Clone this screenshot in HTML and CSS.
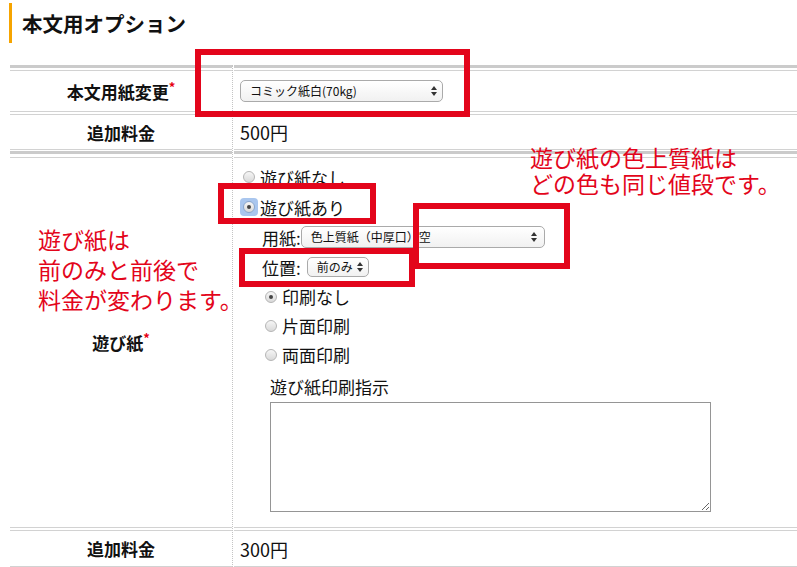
FILE: index.html
```html
<!DOCTYPE html>
<html lang="ja">
<head>
<meta charset="utf-8">
<title>本文用オプション</title>
<link rel="stylesheet" href="styles.css">
</head>
<body>
<h2 class="title">本文用オプション</h2>

<div class="form">
  <div class="divider"></div>

  <div class="bar bar-l bar-first"></div>
  <div class="bar bar-r bar-first"></div>

  <div class="th r1">本文用紙変更<span class="req">*</span></div>
  <div class="td r1">
    <span class="select s1"><span class="sel-text">コミック紙白(70kg)</span><svg class="arrows" width="6" height="10" viewBox="0 0 6 10"><path d="M0 4 L3 0 L6 4Z M0 6 L3 10 L6 6Z"/></svg></span>
  </div>

  <div class="th r2">追加料金</div>
  <div class="td r2 value">500円</div>

  <div class="bar bar-l bar-second"></div>
  <div class="bar bar-r bar-second"></div>

  <div class="th r3">遊び紙<span class="req">*</span></div>
  <div class="td r3">
    <div class="line l30 opt"><span class="radio"></span>遊び紙なし</div>
    <div class="line l30 opt"><span class="focus"><span class="radio checked"></span></span>遊び紙あり</div>
    <div class="line l30 field">用紙:<span class="select s2"><span class="sel-text">色上質紙（中厚口）空</span><svg class="arrows" width="6" height="10" viewBox="0 0 6 10"><path d="M0 4 L3 0 L6 4Z M0 6 L3 10 L6 6Z"/></svg></span></div>
    <div class="line l30 field">位置:<span class="select s3"><span class="sel-text">前のみ</span><svg class="arrows" width="6" height="10" viewBox="0 0 6 10"><path d="M0 4 L3 0 L6 4Z M0 6 L3 10 L6 6Z"/></svg></span></div>
    <div class="line l29 sub"><span class="radio checked"></span>印刷なし</div>
    <div class="line l29 sub"><span class="radio"></span>片面印刷</div>
    <div class="line l29 sub"><span class="radio"></span>両面印刷</div>
    <div class="memo-label">遊び紙印刷指示</div>
    <textarea class="memo"></textarea>
  </div>

  <div class="th r4">追加料金</div>
  <div class="td r4 value">300円</div>
</div>

<div class="mark m1"></div>
<div class="mark m2"></div>
<div class="mark m3"></div>
<div class="mark m4"></div>

<div class="note note-right">
  <div class="note-line">遊び紙の色上質紙は</div>
  <div class="note-line">どの色も同じ値段です。</div>
</div>
<div class="note note-left">
  <div class="note-line">遊び紙は</div>
  <div class="note-line">前のみと前後で</div>
  <div class="note-line">料金が変わります。</div>
</div>
</body>
</html>
```

FILE: styles.css
```css
html, body {
  margin: 0;
  padding: 0;
  background: #fff;
}

body {
  position: relative;
  width: 797px;
  height: 567px;
  overflow: hidden;
  font-family: "Noto Sans CJK JP", "Liberation Sans", sans-serif;
  color: #111;
}

.title {
  margin: 3px 0 0 9px;
  height: 40px;
  line-height: 40px;
  border-left: 3px solid #f6a400;
  padding-left: 10px;
  font-size: 20.5px;
  font-weight: bold;
  color: #111;
}

.form {
  margin: 22px 0 0 10px;
  display: grid;
  grid-template-columns: 222px 2px 1fr;
}

.divider {
  grid-column: 2;
  grid-row: 1 / span 6;
  width: 0;
  border-left: 1px dotted #c4c4c4;
}

.bar {
  height: 3px;
  background: #cbcbcb;
}
.bar-l { grid-column: 1; }
.bar-r { grid-column: 3; }
.bar-first { margin-bottom: 2px; }
.bar-second { margin-bottom: 3px; }

.th, .td {
  border-top: 1px solid #d2d2d2;
  border-bottom: 1px solid #d2d2d2;
}

.th {
  grid-column: 1;
  display: flex;
  align-items: center;
  justify-content: center;
  font-size: 17px;
  font-weight: bold;
  color: #111;
}

.td {
  grid-column: 3;
  font-size: 17px;
  color: #111;
}

.req {
  color: #e60012;
  font-size: 13px;
  align-self: center;
  margin-top: -10px;
}

.r1 { height: 40px; margin-bottom: 2px; }
.td.r1 {
  display: flex;
  align-items: center;
  padding-left: 6px;
}

.r2 { height: 34px; margin-bottom: 1px; }
.r3 { margin-bottom: 2px; }
.r4 { height: 35px; }

.value {
  display: flex;
  align-items: center;
  padding-left: 6px;
  font-size: 18px;
}

/* select look */
.select {
  box-sizing: border-box;
  display: inline-flex;
  align-items: center;
  justify-content: space-between;
  height: 22px;
  border: 1px solid #aaa;
  border-radius: 5px;
  background: linear-gradient(#ffffff, #f1f1f1);
  font-size: 12px;
  color: #111;
  line-height: 1;
}
.sel-text { white-space: nowrap; }
.arrows path { fill: #333; }

.s1 { width: 203px; padding: 0 5px 0 9px; }
.s2 { width: 244px; padding: 0 7px 0 9px; }
.s3 { width: 62px; height: 20px; padding: 0 5px 0 9px; margin-left: 6px; }

/* row 3 content */
.td.r3 {
  padding: 4px 0 15px 0;
}

.line {
  display: flex;
  align-items: center;
  white-space: nowrap;
}
.l30 { height: 30px; }
.l29 { height: 29px; }

.opt { padding-left: 9px; }
.field { padding-left: 28px; }
.sub { padding-left: 31px; }

.radio {
  box-sizing: border-box;
  display: inline-block;
  width: 12px;
  height: 12px;
  border-radius: 50%;
  border: 1px solid #b5b5b5;
  background: linear-gradient(#f6f6f6, #d9d9d9);
  margin-right: 5px;
  position: relative;
  flex: none;
}
.radio.checked::after {
  content: "";
  position: absolute;
  left: 3px;
  top: 3px;
  width: 4px;
  height: 4px;
  border-radius: 50%;
  background: #444;
}

.focus {
  display: inline-flex;
  align-items: center;
  justify-content: center;
  width: 18px;
  height: 18px;
  margin-left: -3px;
  margin-right: 2px;
  border-radius: 4px;
  background: #a9c6ee;
  flex: none;
}
.focus .radio { margin-right: 0; border-color: #8aa6cc; }

.memo-label {
  margin: 5px 0 0 36px;
  height: 26px;
  line-height: 26px;
  font-size: 17px;
}

.memo {
  display: block;
  box-sizing: border-box;
  margin: 2px 0 0 36px;
  width: 441px;
  height: 110px;
  border: 1px solid #959595;
  padding: 2px;
  font-family: inherit;
  background: #fff;
}

/* red annotation boxes */
.mark {
  position: absolute;
  box-sizing: border-box;
  border: 6px solid #e3051b;
}
.m1 { left: 195px; top: 49px; width: 275px; height: 68px; }
.m2 { left: 218px; top: 183px; width: 158px; height: 41px; }
.m3 { left: 239px; top: 248px; width: 176px; height: 39px; }
.m4 { left: 413px; top: 203px; width: 157px; height: 66px; }

.note {
  position: absolute;
  color: #e3051b;
  font-size: 23px;
  white-space: nowrap;
}
.note-right { left: 530px; top: 144px; }
.note-right .note-line { height: 26px; line-height: 26px; }
.note-left { left: 38px; top: 224px; }
.note-left .note-line { height: 30px; line-height: 30px; }
```
